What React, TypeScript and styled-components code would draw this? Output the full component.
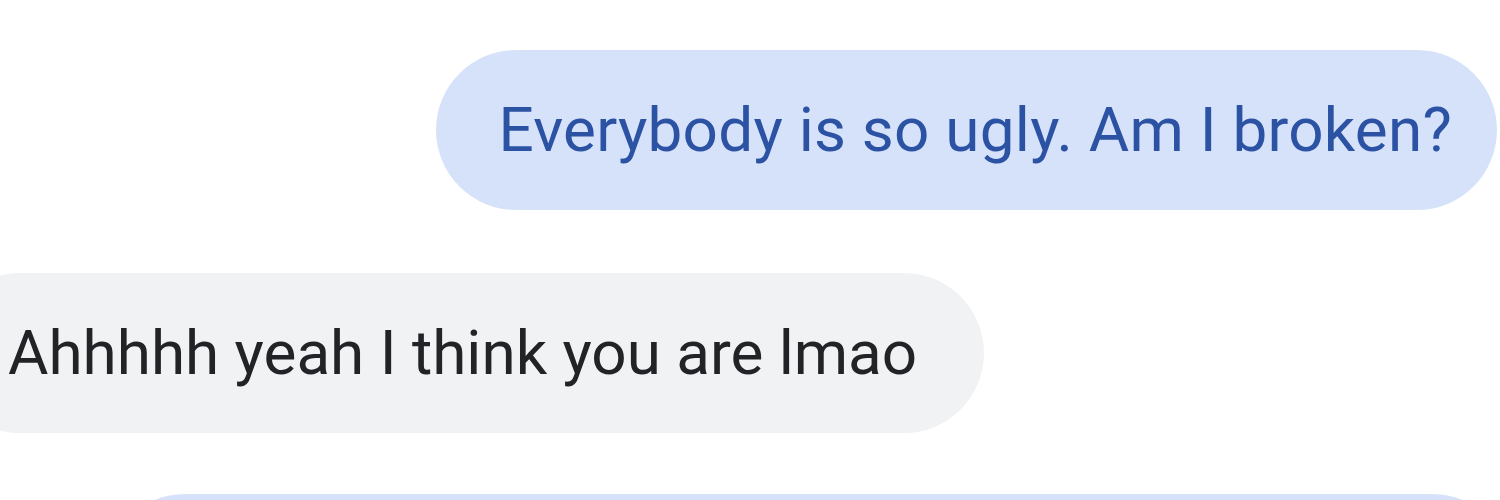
import React from "react";
import styled, { createGlobalStyle } from "styled-components";

const Global = createGlobalStyle`
  html, body { margin: 0; padding: 0; background: #ffffff; }
  body { font-family: Roboto, "Noto Sans", sans-serif; }
`;

const Thread = styled.div`
  width: 1500px;
  height: 500px;
  overflow: hidden;
  display: flex;
  flex-direction: column;
  gap: 63px;
  padding-top: 50px;
  box-sizing: border-box;
`;

const Row = styled.div<{ $side: "in" | "out" }>`
  display: flex;
  justify-content: ${(p) => (p.$side === "out" ? "flex-end" : "flex-start")};
`;

const Bubble = styled.div<{ $side: "in" | "out" }>`
  height: 160px;
  box-sizing: border-box;
  border-radius: 80px;
  display: flex;
  align-items: center;
  font-size: 62px;
  letter-spacing: ${(p) => (p.$side === "out" ? "0.25px" : "0px")};
  line-height: 1;
  white-space: nowrap;
  background: ${(p) => (p.$side === "out" ? "#d6e2f9" : "#f1f2f4")};
  color: ${(p) => (p.$side === "out" ? "#2c52a4" : "#222326")};
  padding: ${(p) => (p.$side === "out" ? "0 45px 0 62px" : "0 67px 0 68px")};
  margin: ${(p) => (p.$side === "out" ? "0 3px 0 0" : "0 0 0 -60px")};
`;

const WideBubble = styled.div`
  flex: none;
  margin: -2px -12px 0 105px;
  height: 160px;
  border-radius: 80px;
  background: #d6e2f9;
`;

export default function App() {
  return (
    <>
      <Global />
      <Thread>
        <Row $side="out">
          <Bubble $side="out">Everybody is so ugly. Am I broken?</Bubble>
        </Row>
        <Row $side="in">
          <Bubble $side="in">Ahhhhh yeah I think you are lmao</Bubble>
        </Row>
        <WideBubble />
      </Thread>
    </>
  );
}
